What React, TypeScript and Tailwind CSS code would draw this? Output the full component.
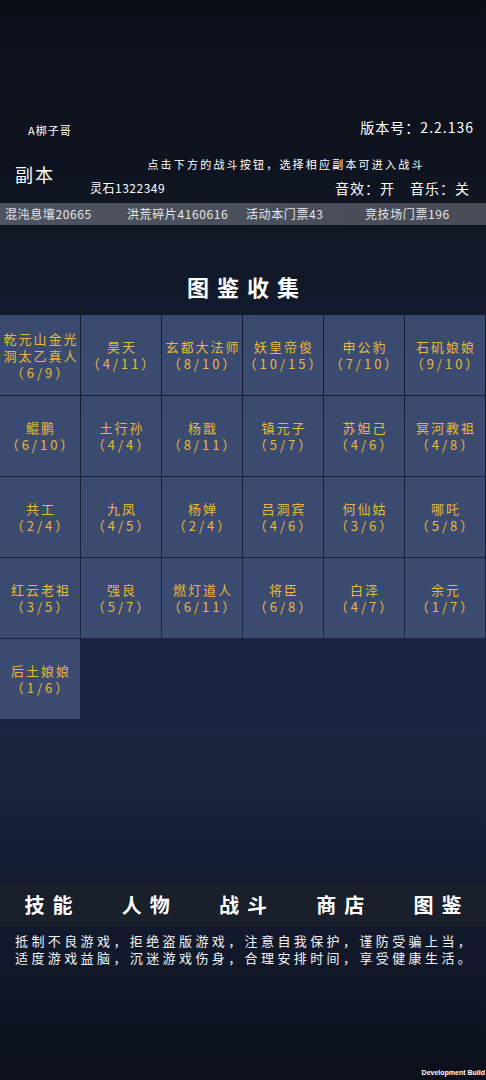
import React from "react";

const cells: [string, string][] = [
  ["乾元山金光洞太乙真人", "（6/9）"],
  ["昊天", "（4/11）"],
  ["玄都大法师", "（8/10）"],
  ["妖皇帝俊", "（10/15）"],
  ["申公豹", "（7/10）"],
  ["石矶娘娘", "（9/10）"],
  ["鲲鹏", "（6/10）"],
  ["土行孙", "（4/4）"],
  ["杨戬", "（8/11）"],
  ["镇元子", "（5/7）"],
  ["苏妲己", "（4/6）"],
  ["冥河教祖", "（4/8）"],
  ["共工", "（2/4）"],
  ["九凤", "（4/5）"],
  ["杨婵", "（2/4）"],
  ["吕洞宾", "（4/6）"],
  ["何仙姑", "（3/6）"],
  ["哪吒", "（5/8）"],
  ["红云老祖", "（3/5）"],
  ["强良", "（5/7）"],
  ["燃灯道人", "（6/11）"],
  ["将臣", "（6/8）"],
  ["白泽", "（4/7）"],
  ["余元", "（1/7）"],
  ["后土娘娘", "（1/6）"],
];

const navs = ["技能", "人物", "战斗", "商店", "图鉴"];

export default function App() {
  return (
    <div
      className="relative w-[486px] h-[1080px] overflow-hidden flex flex-col text-white bg-[linear-gradient(180deg,#0a0e17_0%,#0f1521_18%,#131b2d_30%,#1a2440_55%,#1b2642_68%,#141c31_82%,#0c111c_100%)]"
      style={{ fontFamily: '"Noto Sans CJK SC", "Noto Sans", sans-serif' }}
    >
      {/* header */}
      <div className="pt-[117px]">
        <div className="flex justify-between h-[22px]">
          <div className="pl-[28px] pt-[6px] text-[11px] leading-[14px] tracking-[1px]">A梆子哥</div>
          <div className="pr-[12px] text-[14px] leading-[20px] tracking-[1px]">版本号：2.2.136</div>
        </div>
        <div className="flex mt-[14px] h-[50px]">
          <div className="w-[90px] pl-[15px] pt-[9px] text-[18px] leading-[24px] tracking-[2px]">副本</div>
          <div className="flex-1 flex flex-col">
            <div className="text-center pr-[4px] pt-[3px] text-[11px] leading-[16px] tracking-[2.2px]">
              点击下方的战斗按钮，选择相应副本可进入战斗
            </div>
            <div className="flex justify-between mt-[7px] items-center">
              <div className="text-[12px] leading-[16px] tracking-[0.5px]">灵石1322349</div>
              <div className="pr-[16px] text-[14px] leading-[18px] tracking-[1px]">音效：开　音乐：关</div>
            </div>
          </div>
        </div>
        <div className="h-[22px] bg-[linear-gradient(90deg,#4d535f,#474c57)] flex items-center text-[12px] leading-[16px] tracking-[0.6px] text-[#e5e7eb]">
          <div className="w-[127px] pl-[5px]">混沌息壤20665</div>
          <div className="w-[119px]">洪荒碎片4160616</div>
          <div className="w-[119px]">活动本门票43</div>
          <div>竞技场门票196</div>
        </div>
      </div>

      {/* title */}
      <div className="mt-[48px] h-[27px] text-center text-[22px] leading-[27px] font-bold tracking-[8px] pl-[8px]">
        图鉴收集
      </div>

      {/* grid */}
      <div className="mt-[15px] grid grid-cols-6 gap-px w-[485px]">
        {cells.map(([name, count], i) => (
          <div
            key={i}
            className="h-[80px] bg-[linear-gradient(180deg,#3a4a6e,#3c4c71)] flex flex-col items-center justify-center text-center text-[#e8b83a] text-[13px] leading-[17px] tracking-[2px]"
          >
            <div className="w-[78px] pl-[2px]">{name}</div>
            <div className="pl-[2px] tracking-[3px]">{count}</div>
          </div>
        ))}
      </div>

      <div className="flex-1" />

      {/* bottom nav */}
      <div className="h-[45px] bg-[#1a202b] grid grid-cols-5 items-center">
        {navs.map((n) => (
          <div key={n} className="text-center text-[20px] leading-[26px] font-bold tracking-[8px] pl-[8px]">
            {n}
          </div>
        ))}
      </div>

      {/* footer notice */}
      <div className="mt-[5px] pl-[15px] text-[13px] leading-[17px] tracking-[3.4px] text-[#f3f4f6]">
        <div>抵制不良游戏，拒绝盗版游戏，注意自我保护，谨防受骗上当，</div>
        <div>适度游戏益脑，沉迷游戏伤身，合理安排时间，享受健康生活。</div>
      </div>

      <div className="h-[114px] flex items-end justify-end pr-[1px] pb-[3px]">
        <div className="text-[7px] leading-[9px] font-bold" style={{ fontFamily: '"Liberation Sans", sans-serif' }}>
          Development Build
        </div>
      </div>
    </div>
  );
}
